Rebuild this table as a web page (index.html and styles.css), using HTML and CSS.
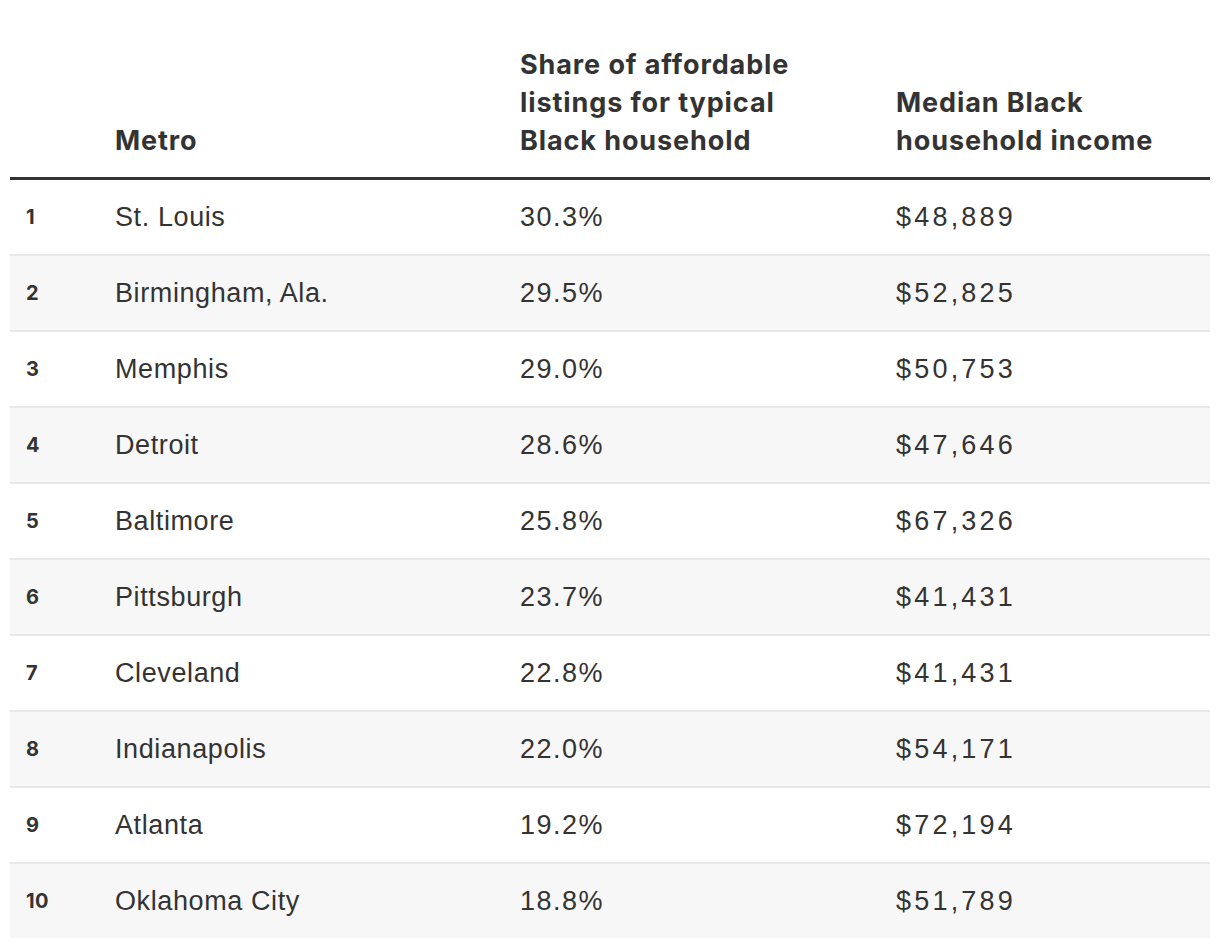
FILE: index.html
```html
<!DOCTYPE html>
<html>
<head>
<meta charset="utf-8">
<link rel="stylesheet" href="styles.css">
</head>
<body>
<div class="table">
  <div class="row head">
    <div class="cell rank"></div>
    <div class="cell">Metro</div>
    <div class="cell">Share of affordable<br>listings for typical<br>Black household</div>
    <div class="cell">Median Black<br>household income</div>
  </div>
  <div class="row"><div class="cell rank">1</div><div class="cell">St. Louis</div><div class="cell pct">30.3%</div><div class="cell money">$48,889</div></div>
  <div class="row alt"><div class="cell rank">2</div><div class="cell">Birmingham, Ala.</div><div class="cell pct">29.5%</div><div class="cell money">$52,825</div></div>
  <div class="row"><div class="cell rank">3</div><div class="cell">Memphis</div><div class="cell pct">29.0%</div><div class="cell money">$50,753</div></div>
  <div class="row alt"><div class="cell rank">4</div><div class="cell">Detroit</div><div class="cell pct">28.6%</div><div class="cell money">$47,646</div></div>
  <div class="row"><div class="cell rank">5</div><div class="cell">Baltimore</div><div class="cell pct">25.8%</div><div class="cell money">$67,326</div></div>
  <div class="row alt"><div class="cell rank">6</div><div class="cell">Pittsburgh</div><div class="cell pct">23.7%</div><div class="cell money">$41,431</div></div>
  <div class="row"><div class="cell rank">7</div><div class="cell">Cleveland</div><div class="cell pct">22.8%</div><div class="cell money">$41,431</div></div>
  <div class="row alt"><div class="cell rank">8</div><div class="cell">Indianapolis</div><div class="cell pct">22.0%</div><div class="cell money">$54,171</div></div>
  <div class="row"><div class="cell rank">9</div><div class="cell">Atlanta</div><div class="cell pct">19.2%</div><div class="cell money">$72,194</div></div>
  <div class="row alt"><div class="cell rank">10</div><div class="cell">Oklahoma City</div><div class="cell pct">18.8%</div><div class="cell money">$51,789</div></div>
</div>
</body>
</html>
```
FILE: styles.css
```css
html, body {
  margin: 0;
  padding: 0;
  background: #fff;
}
body {
  padding: 0 10px;
  color: #333;
  font-family: "Liberation Sans", Arial, sans-serif;
}
.table {
  width: 1200px;
}
.row {
  display: grid;
  grid-template-columns: 105px 405px 376px 1fr;
  align-items: center;
  height: 74px;
  font-size: 27px;
  letter-spacing: 0.6px;
  border-top: 2px solid #e8e8e8;
}
.row.alt {
  background: #f7f7f7;
}
.row.head {
  align-items: end;
  border-top: none;
  border-bottom: 3px solid #333;
  font-family: "Inter", "Liberation Sans", sans-serif;
  font-weight: 700;
  font-size: 27px;
  line-height: 38px;
  letter-spacing: 0.9px;
  padding-bottom: 17px;
  box-sizing: border-box;
  height: 180px;
}
.row.head + .row {
  border-top: none;
}
.cell.pct {
  letter-spacing: 1.5px;
}
.cell.money {
  letter-spacing: 3.2px;
}
.cell.rank {
  padding-left: 16px;
  font-family: "Inter", "Liberation Sans", sans-serif;
  font-size: 20px;
  font-weight: 700;
  letter-spacing: 0.3px;
}
```
